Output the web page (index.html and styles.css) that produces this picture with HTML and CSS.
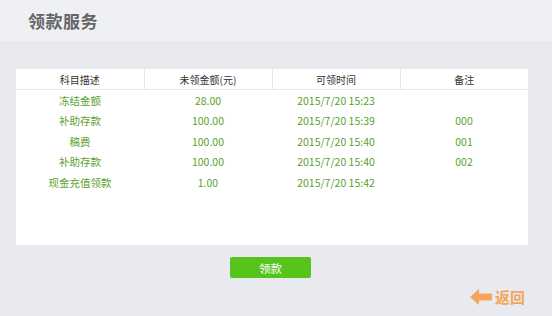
FILE: index.html
```html
<!DOCTYPE html>
<html lang="zh-CN">
<head>
<meta charset="utf-8">
<title>领款服务</title>
<link rel="stylesheet" href="styles.css">
</head>
<body>
<div class="header"><h1 class="title">领款服务</h1></div>
<div class="main">
  <div class="panel">
    <table class="grid">
      <thead>
        <tr><th>科目描述</th><th>未领金额(元)</th><th>可领时间</th><th>备注</th></tr>
      </thead>
      <tbody>
        <tr><td>冻结金额</td><td>28.00</td><td>2015/7/20 15:23</td><td></td></tr>
        <tr><td>补助存款</td><td>100.00</td><td>2015/7/20 15:39</td><td>000</td></tr>
        <tr><td>稿费</td><td>100.00</td><td>2015/7/20 15:40</td><td>001</td></tr>
        <tr><td>补助存款</td><td>100.00</td><td>2015/7/20 15:40</td><td>002</td></tr>
        <tr><td>现金充值领款</td><td>1.00</td><td>2015/7/20 15:42</td><td></td></tr>
      </tbody>
    </table>
  </div>
  <div class="actions"><button class="btn">领款</button></div>
  <div class="back-row">
    <a class="back" href="#">
      <svg class="arrow" width="22" height="16" viewBox="0 0 22 16"><polygon points="0,8 9,0 9,4.5 22,4.5 22,11.5 9,11.5 9,16" fill="#f5a55a"/></svg>
      <span>返回</span>
    </a>
  </div>
</div>
</body>
</html>
```
FILE: styles.css
```css
html, body {
  margin: 0;
  padding: 0;
}
body {
  width: 552px;
  height: 316px;
  overflow: hidden;
  background: #e8eaef;
  font-family: "Noto Sans CJK SC", "Microsoft YaHei", sans-serif;
}
.header {
  height: 41px;
  background: #eef0f4;
  display: flex;
  align-items: center;
  padding-left: 28px;
}
.title {
  margin: 0;
  font-size: 17px;
  font-weight: bold;
  color: #666;
  letter-spacing: 0.5px;
}
.main {
  padding: 28px 24px 0 16px;
}
.panel {
  background: #fff;
  height: 176px;
}
.grid {
  width: 100%;
  border-collapse: collapse;
  table-layout: fixed;
}
.grid th {
  height: 20px;
  padding: 0;
  font-size: 10px;
  font-weight: normal;
  color: #333;
  border-bottom: 1px solid #e6e6e6;
  border-left: 1px solid #e6e6e6;
}
.grid th:first-child {
  border-left: none;
}
.grid td {
  height: 20.5px;
  padding: 0;
  text-align: center;
  font-size: 10.5px;
  color: #5a9f2d;
}
.actions {
  display: flex;
  justify-content: center;
  margin-top: 12px;
  padding-right: 3px;
}
.btn {
  width: 81px;
  height: 21px;
  border: none;
  border-radius: 2px;
  background: #56c41c;
  color: #fff;
  font-family: inherit;
  font-size: 11.5px;
  padding: 0;
}
.back-row {
  display: flex;
  justify-content: flex-end;
  margin-top: 8px;
  margin-right: 3px;
}
.back {
  display: flex;
  align-items: center;
  gap: 3px;
  text-decoration: none;
  color: #f5a55a;
  font-size: 15px;
  font-weight: bold;
}
.arrow {
  display: block;
}
```
